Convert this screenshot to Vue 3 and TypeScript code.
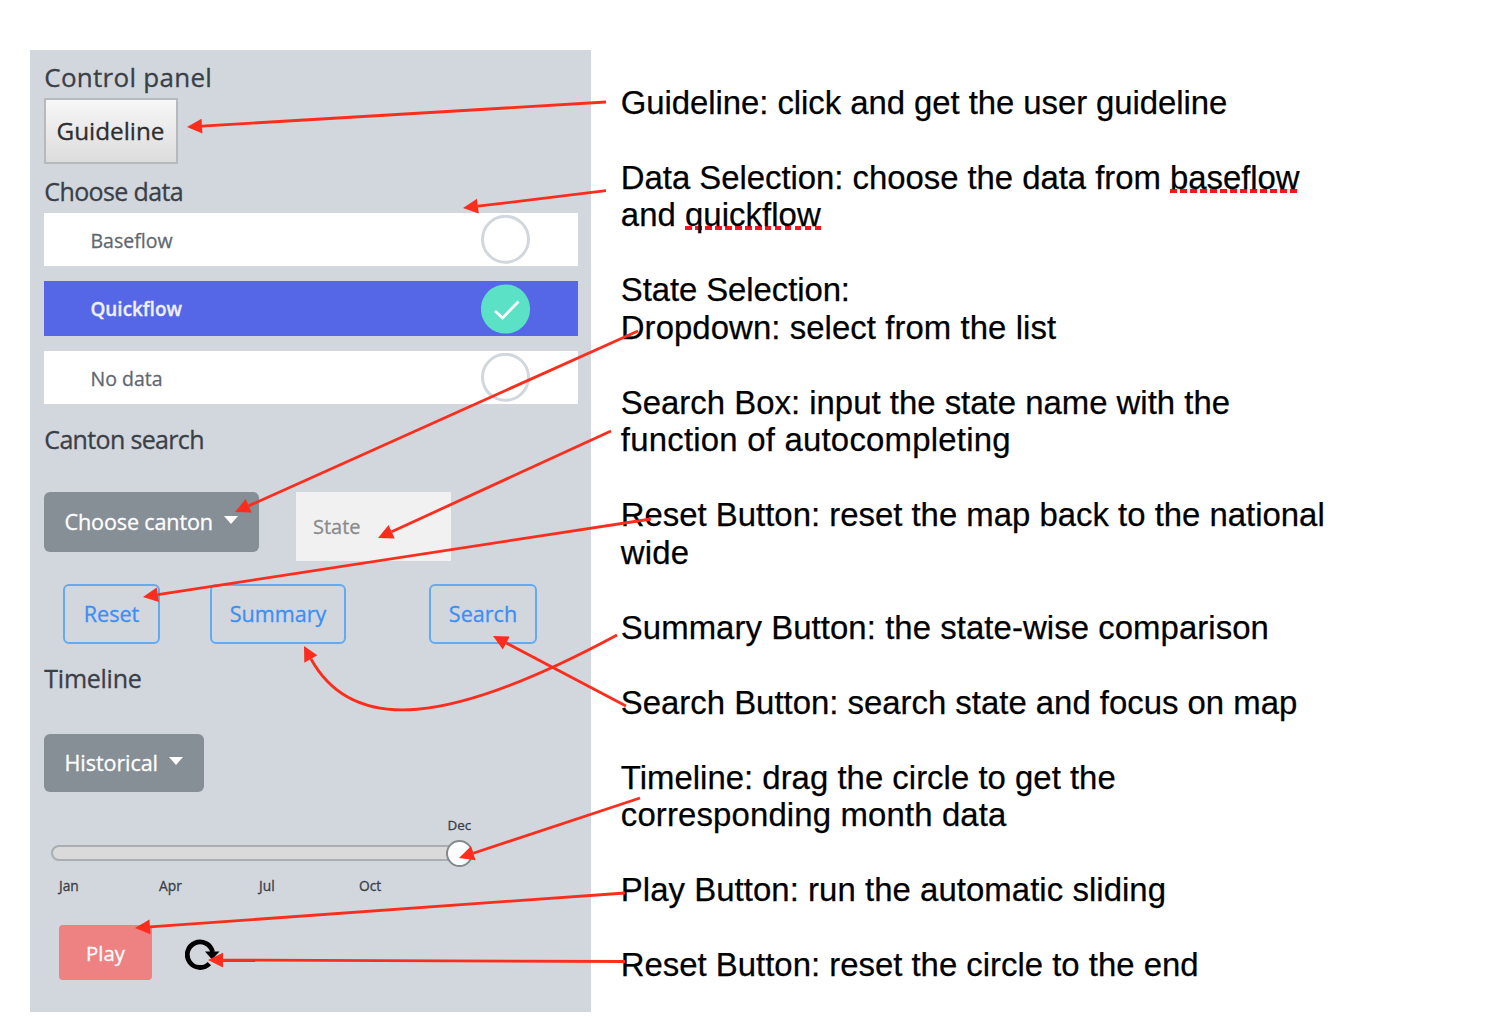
<script setup lang="ts">
interface Part { text: string; misspelled?: boolean }
interface Line { parts: Part[]; spacing: number }
interface Arrow { from: [number, number]; tip: [number, number] }

const plain = (text: string, spacing = 0): Line => ({ parts: [{ text }], spacing })
const blank = (): Line => plain('')

const lines: Line[] = [
  plain('Guideline: click and get the user guideline', -0.055),
  blank(),
  { parts: [{ text: 'Data Selection: choose the data from ' }, { text: 'baseflow', misspelled: true }], spacing: -0.03 },
  { parts: [{ text: 'and ' }, { text: 'quickflow', misspelled: true }], spacing: 0.05 },
  blank(),
  plain('State Selection:', -0.08),
  plain('Dropdown: select from the list', 0.07),
  blank(),
  plain('Search Box: input the state name with the', 0.01),
  plain('function of autocompleting', 0.23),
  blank(),
  plain('Reset Button: reset the map back to the national'),
  plain('wide', 0.2),
  blank(),
  plain('Summary Button: the state-wise comparison', 0.07),
  blank(),
  plain('Search Button: search state and focus on map'),
  blank(),
  plain('Timeline: drag the circle to get the', 0.02),
  plain('corresponding month data', 0.15),
  blank(),
  plain('Play Button: run the automatic sliding', 0.06),
  blank(),
  plain('Reset Button: reset the circle to the end'),
]

const options = [
  { label: 'Baseflow', selected: false },
  { label: 'Quickflow', selected: true },
  { label: 'No data', selected: false },
]

const arrows: Arrow[] = [
  { from: [606, 102], tip: [187, 127] },
  { from: [606, 190.7], tip: [463, 208] },
  { from: [638, 331], tip: [235, 512] },
  { from: [611, 431], tip: [378, 538] },
  { from: [651, 519], tip: [143, 597] },
  { from: [626, 706], tip: [493, 636] },
  { from: [640, 798], tip: [459, 858] },
  { from: [625, 893], tip: [135, 928] },
  { from: [625, 961.5], tip: [208, 960] },
]

const HEAD = 15
const HALF = 7.4

function shape(a: Arrow) {
  const dx = a.from[0] - a.tip[0]
  const dy = a.from[1] - a.tip[1]
  const len = Math.hypot(dx, dy)
  const ux = dx / len
  const uy = dy / len
  const bx = a.tip[0] + ux * HEAD
  const by = a.tip[1] + uy * HEAD
  return {
    line: `M${a.from[0]} ${a.from[1]}L${bx} ${by}`,
    head: `${a.tip[0]},${a.tip[1]} ${bx - uy * HALF},${by + ux * HALF} ${bx + uy * HALF},${by - ux * HALF}`,
  }
}
const shapes = arrows.map(shape)
</script>

<template>
  <main class="page">
    <section class="panel">
      <h2 class="heading title">Control panel</h2>
      <button class="guideline">Guideline</button>
      <h2 class="heading choose">Choose data</h2>
      <ul class="options">
        <li v-for="o in options" :key="o.label" class="option" :class="{ selected: o.selected }">
          <span>{{ o.label }}</span>
          <svg class="radio" viewBox="0 0 50 50">
            <template v-if="o.selected">
              <circle cx="24.5" cy="25" r="24.6" fill="#5be1c6" />
              <path d="M14 27L21.5 34L37.5 17.5" fill="none" stroke="#fff" stroke-width="2.8" />
            </template>
            <circle v-else cx="24.5" cy="24.3" r="23" fill="#fff" stroke="#d1d7dc" stroke-width="3" />
          </svg>
        </li>
      </ul>
      <h2 class="heading canton">Canton search</h2>
      <div class="row pick">
        <button class="drop drop-canton"><span>Choose canton</span><i class="caret"></i></button>
        <div class="field">State</div>
      </div>
      <div class="row actions">
        <button class="outline reset">Reset</button>
        <button class="outline summary">Summary</button>
        <button class="outline search">Search</button>
      </div>
      <h2 class="heading timeline">Timeline</h2>
      <button class="drop drop-hist"><span>Historical</span><i class="caret"></i></button>
      <div class="current"><span>Dec</span></div>
      <div class="track"><i class="knob"></i></div>
      <div class="months">
        <span>Jan</span><span>Apr</span><span>Jul</span><span>Oct</span>
      </div>
      <div class="row player">
        <button class="play">Play</button>
        <svg class="reload" viewBox="0 0 36 34">
          <path d="M24.3 25.6A12.8 12.8 0 1 1 27.6 14" fill="none" stroke="#000" stroke-width="4.8" />
          <path d="M20 13.6H34.5L27 21.5Z" fill="#000" />
        </svg>
      </div>
    </section>

    <section class="notes">
      <div v-for="(l, i) in lines" :key="i" class="line" :style="{ letterSpacing: l.spacing + 'px' }"><span
        v-for="(p, j) in l.parts" :key="j" :class="{ misspelled: p.misspelled }">{{ p.text }}</span></div>
    </section>

    <svg class="arrows" viewBox="0 0 1506 1030">
      <g v-for="(s, i) in shapes" :key="i">
        <path :d="s.line" />
        <polygon :points="s.head" />
      </g>
      <path d="M311 659C353 735 450 725 617 635" />
      <polygon points="304,646 304.3,662.7 317.3,655.3" />
    </svg>
  </main>
</template>

<style>
body { background: #fff; }
</style>

<style scoped>
.page {
  position: relative;
  display: flex;
  align-items: flex-start;
  box-sizing: border-box;
  width: 1506px;
  height: 1030px;
  padding: 50px 0 0 30px;
  overflow: hidden;
  background: #fff;
}
.panel {
  display: flex;
  flex-direction: column;
  align-items: flex-start;
  flex: none;
  box-sizing: border-box;
  width: 561px;
  height: 962px;
  padding: 10px 13.5px 0;
  background: #d2d6dd;
  font-family: "Open Sans", "Noto Sans", sans-serif;
  color: #3a4047;
  -webkit-text-stroke: 0.3px currentColor;
}
button {
  display: flex;
  align-items: center;
  justify-content: center;
  box-sizing: border-box;
  margin: 0;
  padding: 0;
  border: 0;
  font-family: inherit;
  font-size: 21.6px;
  white-space: nowrap;
}
.heading {
  margin: 0 0 0 0.8px;
  height: 34px;
  line-height: 34px;
  font-size: 25px;
  font-weight: 400;
  white-space: nowrap;
}
.title { font-size: 26px; letter-spacing: 0.27px; }
.guideline {
  width: 134px;
  height: 66px;
  margin: 4px 0 10px;
  padding-bottom: 1px;
  border: 2px solid #b7babd;
  background: linear-gradient(#f7f7f7, #dcdcdc);
  color: #2e2e2e;
  font-size: 24.3px;
}
.choose { letter-spacing: -0.62px; }
.options {
  display: flex;
  flex-direction: column;
  gap: 15px;
  width: 534px;
  margin: 5px 0 18px;
  padding: 0;
  list-style: none;
}
.option {
  display: flex;
  align-items: center;
  justify-content: space-between;
  box-sizing: border-box;
  height: 53px;
  padding: 1px 47px 0 47px;
  background: #fff;
  color: #5f6870;
  font-size: 19.5px;
}
.option.selected {
  height: 55px;
  background: #5567e7;
  color: #eef0ff;
  font-weight: 600;
  font-size: 18.9px;
}
.radio { width: 50px; height: 50px; margin-top: -1px; }
.canton { letter-spacing: -0.66px; }
.timeline { letter-spacing: -0.25px; }
.row { display: flex; align-items: flex-start; }
.pick { margin-top: 36px; height: 69px; }
.drop {
  gap: 11px;
  border-radius: 6px;
  background: #868e96;
  color: #fff;
}
.drop-canton { width: 215.5px; height: 59.5px; letter-spacing: -0.15px; padding-bottom: 1px; }
.drop-hist { width: 160.5px; height: 58px; letter-spacing: -0.1px; margin-top: 38.5px; padding-bottom: 1px; }
.caret {
  border-left: 7.5px solid transparent;
  border-right: 7.5px solid transparent;
  border-top: 8.5px solid #fff;
  margin-top: -3px;
}
.field {
  box-sizing: border-box;
  width: 155px;
  height: 69px;
  margin-left: 37px;
  padding-left: 17px;
  background: #f1f1f1;
  color: #8b8b8b;
  font-size: 20px;
  line-height: 70px;
}
.actions { margin: 23px 0 17px 19.5px; }
.outline {
  height: 60px;
  border: 2px solid #65a9ee;
  border-radius: 6px;
  background: transparent;
  color: #3b8ff5;
  padding-bottom: 1px;
}
.reset { width: 97px; }
.summary { width: 136px; margin-left: 50px; }
.search { width: 108px; margin-left: 83px; }
.current {
  height: 16px;
  margin: 25px 0 12.5px 404px;
  font-size: 13.4px;
  line-height: 16px;
}
.track {
  position: relative;
  box-sizing: border-box;
  width: 418px;
  height: 16px;
  margin-left: 7.5px;
  border: 2px solid #a9aeb2;
  border-radius: 8px;
  background: #dadada;
}
.knob {
  position: absolute;
  box-sizing: border-box;
  right: -6px;
  top: -7.5px;
  width: 27px;
  height: 27px;
  border: 2px solid #85898c;
  border-radius: 50%;
  background: #fff;
}
.months {
  display: grid;
  grid-template-columns: repeat(4, 100px);
  height: 16px;
  margin: 17px 0 0 15.5px;
  font-size: 13.8px;
  line-height: 16px;
}
.player { margin: 31px 0 0 15.5px; }
.play {
  width: 93px;
  height: 55px;
  border-radius: 4px;
  background: #ee8181;
  color: #fff;
  font-size: 20.3px;
}
.reload { width: 36px; height: 34px; margin: 13px 0 0 33px; }
.notes {
  margin: 33.5px 0 0 29.8px;
  font-family: "Liberation Sans", Arial, sans-serif;
  font-size: 32.9px;
  line-height: 37.5px;
  color: #000;
  -webkit-text-stroke: 0.25px #000;
}
.line { height: 37.5px; white-space: pre; }
.misspelled {
  background: repeating-linear-gradient(90deg, #fb1220 0 6.5px, transparent 6.5px 10px) 0 calc(100% - 3px) / 100% 4px no-repeat;
}
.arrows {
  position: absolute;
  left: 0;
  top: 0;
  width: 1506px;
  height: 1030px;
  pointer-events: none;
}
.arrows path { fill: none; stroke: #fc2d1c; stroke-width: 2.8; }
.arrows polygon { fill: #fc2d1c; }
</style>
